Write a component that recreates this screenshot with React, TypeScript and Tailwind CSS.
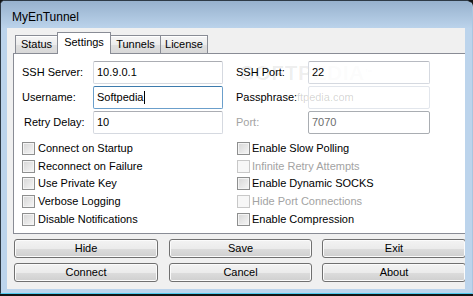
import React from "react";

const tabBase =
  "flex items-center justify-center border-t border-l border-r border-[#898c95] -ml-[1px] h-[18px] bg-[linear-gradient(#f6f6f6,#ececec_50%,#e0e0e0_50%,#d8d8d8)] shadow-[inset_0_1px_0_#ffffff]";

function Checkbox({ label, disabled, right }: { label: string; disabled?: boolean; right?: boolean }) {
  return (
    <div className={"flex items-start " + (right ? "gap-[2px]" : "gap-[3px]")}>
      <div
        className={
          "mt-[1px] w-[13px] h-[13px] border shrink-0 " +
          (disabled
            ? "border-[#c8c8c8] bg-[#f7f7f7]"
            : "border-[#8e8f8f] bg-[linear-gradient(135deg,#d6d6d6,#f6f6f6)] shadow-[inset_0_0_0_1px_#f4f4f4]")
        }
      />
      <span className={"leading-[15px] " + (disabled ? "text-[#a3a3a3]" : "text-black")}>{label}</span>
    </div>
  );
}

function Button({ label, w, ml }: { label: string; w: string; ml: string }) {
  return (
    <div
      className={
        w +
        " " +
        ml +
        " h-[19px] rounded-[3px] border border-[#707070] bg-[linear-gradient(#f3f3f3,#ebebeb_50%,#dddddd_50%,#cfcfcf)] shadow-[inset_0_0_0_1px_#fbfbfb] flex items-center justify-center text-black leading-[13px] shrink-0"
      }
    >
      {label}
    </div>
  );
}

export default function App() {
  const rows: [string, string, boolean, string][] = [
    ["Connect on Startup", "Enable Slow Polling", false, "h-[18px]"],
    ["Reconnect on Failure", "Infinite Retry Attempts", true, "h-[17px]"],
    ["Use Private Key", "Enable Dynamic SOCKS", false, "h-[18px]"],
    ["Verbose Logging", "Hide Port Connections", true, "h-[18px]"],
    ["Disable Notifications", "Enable Compression", false, "h-[18px]"],
  ];
  return (
    <div className="w-[473px] h-[296px] bg-[#141414] overflow-hidden font-['Liberation_Sans',Arial,sans-serif] text-[11px] text-black">
      <div className="w-[473px] h-[294px] rounded-tl-[5px] rounded-tr-[7px] border border-[#2e3a46] border-r-[#a9c6e0] border-b-[#4fc9ee] bg-[#bcd4ec] flex flex-col overflow-hidden">
        {/* Title bar */}
        <div className="h-[27px] shrink-0 bg-[linear-gradient(#97b1cd,#bbd3eb)] pl-[11px] pt-[8px]">
          <span className="text-[12px] leading-[16px] text-black">MyEnTunnel</span>
        </div>
        {/* Body */}
        <div className="flex pl-[6px] pr-[7px]">
          <div className="w-[458px] h-[261px] bg-[#f0f0f0] overflow-hidden flex flex-col">
            {/* Tabs */}
            <div className="mt-[4px] h-[21px] flex items-end pl-[8px] relative z-10">
              <div className={tabBase + " w-[43px] ml-0"}>
                <span className="leading-[13px]">Status</span>
              </div>
              <div className="w-[54px] -ml-[1px] h-[22px] -mb-[1px] bg-white border-t border-l border-r border-[#898c95] flex justify-center pt-[2px] relative z-10">
                <span className="leading-[15px]">Settings</span>
              </div>
              <div className={tabBase + " w-[51px]"}>
                <span className="leading-[13px]">Tunnels</span>
              </div>
              <div className={tabBase + " w-[48px]"}>
                <span className="leading-[13px]">License</span>
              </div>
            </div>
            {/* Panel */}
            <div className="ml-[6px] w-[460px] h-[181px] shrink-0 border border-[#898c95] bg-white relative pl-[8px] pt-[7px]">
              {/* Watermark */}
              <div className="absolute left-[226px] top-[7px] z-0 pointer-events-none select-none text-black/[0.07] font-bold text-[21px] leading-[24px] tracking-[0.5px]">
                SOFTPEDIA<span className="text-[8px] align-top">™</span>
              </div>
              <div className="absolute left-[245px] top-[37px] z-0 pointer-events-none select-none text-black/[0.18] text-[11px] leading-[13px]">
                www.softpedia.com
              </div>
              {/* Row 1 */}
              <div className="flex h-[23px] items-center mb-[2px] relative z-10">
                <div className="w-[71px]">SSH Server:</div>
                <div className="w-[130px] h-[23px] rounded-[2px] border border-[#d5d9e0] border-t-[#abadb3] bg-white pl-[3px] flex items-center pb-[1px]">
                  10.9.0.1
                </div>
                <div className="w-[13px]" />
                <div className="w-[72px]">SSH Port:</div>
                <div className="w-[122px] h-[23px] rounded-[2px] border border-[#d5d9e0] border-t-[#b7bac1] bg-white/80 pl-[3px] flex items-center pb-[1px]">
                  22
                </div>
              </div>
              {/* Row 2 */}
              <div className="flex h-[23px] items-center mb-[2px] relative z-10">
                <div className="w-[71px]">Username:</div>
                <div className="w-[130px] h-[23px] rounded-[2px] border border-[#6b9fcb] border-t-[#3d7bad] bg-white pl-[3px] flex items-center pb-[1px]">
                  <span>Softpedia</span>
                  <span className="inline-block w-[1px] h-[13px] bg-black ml-[1px]" />
                </div>
                <div className="w-[13px]" />
                <div className="w-[72px]">
                  <span className="bg-white">Passphrase:</span>
                </div>
                <div className="w-[122px] h-[23px] rounded-[2px] border border-[#e2e6ec]" />
              </div>
              {/* Row 3 */}
              <div className="flex h-[23px] items-center relative z-10">
                <div className="w-[71px] pl-[2px]">Retry Delay:</div>
                <div className="w-[130px] h-[23px] rounded-[2px] border border-[#d5d9e0] border-t-[#abadb3] bg-white pl-[3px] flex items-center pb-[1px]">
                  10
                </div>
                <div className="w-[13px]" />
                <div className="w-[72px] text-[#a3a3a3]">Port:</div>
                <div className="w-[122px] h-[23px] rounded-[2px] border border-[#a9adb2] bg-white pl-[3px] flex items-center pb-[1px] text-[#6d6d6d]">
                  7070
                </div>
              </div>
              {/* Checkboxes */}
              <div className="mt-[7px] flex flex-col">
                {rows.map(([l, r, rd, h]) => (
                  <div key={l} className={"flex " + h}>
                    <div className="w-[215px]">
                      <Checkbox label={l} />
                    </div>
                    <div>
                      <Checkbox label={r} disabled={rd} right />
                    </div>
                  </div>
                ))}
              </div>
            </div>
            {/* Buttons */}
            <div className="flex mt-[5px]">
              <Button label="Hide" w="w-[144px]" ml="ml-[7px]" />
              <Button label="Save" w="w-[143px]" ml="ml-[11px]" />
              <Button label="Exit" w="w-[144px]" ml="ml-[10px]" />
            </div>
            <div className="flex mt-[5px]">
              <Button label="Connect" w="w-[144px]" ml="ml-[7px]" />
              <Button label="Cancel" w="w-[143px]" ml="ml-[11px]" />
              <Button label="About" w="w-[144px]" ml="ml-[10px]" />
            </div>
          </div>
        </div>
      </div>
    </div>
  );
}
